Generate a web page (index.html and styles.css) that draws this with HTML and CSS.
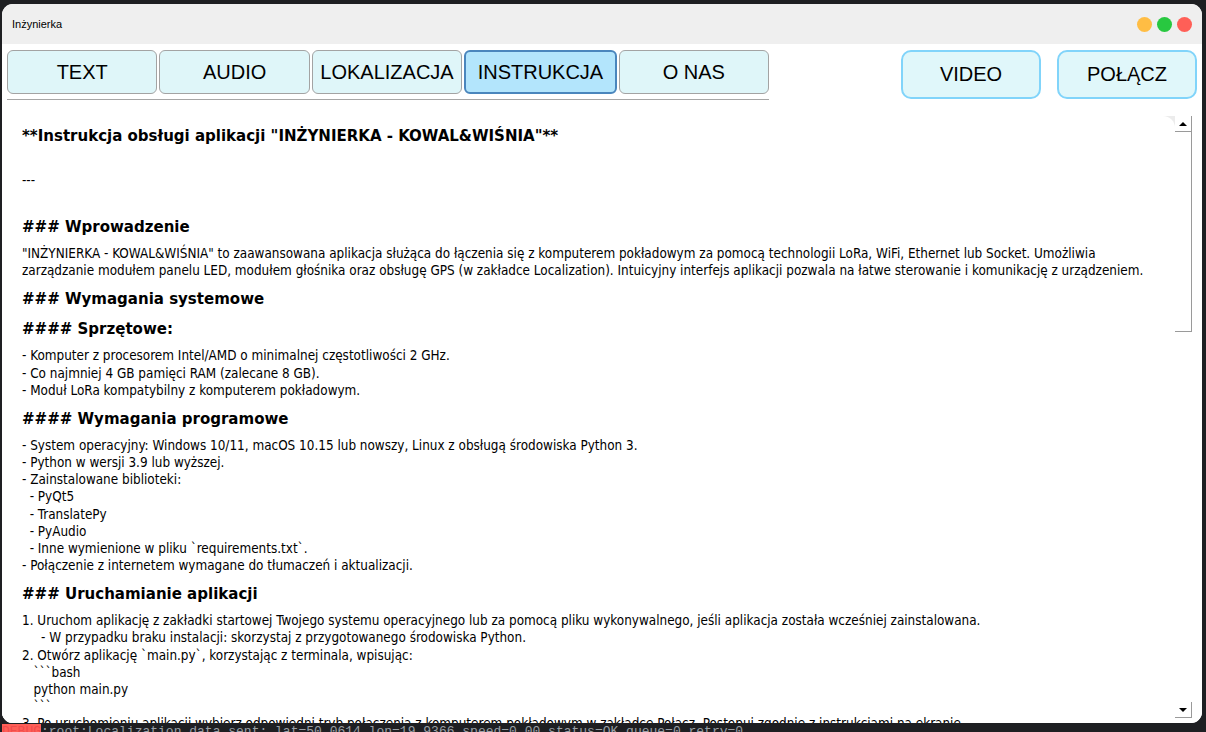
FILE: index.html
```html
<!DOCTYPE html>
<html lang="pl">
<head>
<meta charset="utf-8">
<title>Inżynierka</title>
<link rel="stylesheet" href="styles.css">
</head>
<body>
<div class="desk">
  <div class="window">
    <header class="titlebar">
      <span class="title">Inżynierka</span>
      <div class="lights">
        <span class="light yellow"></span>
        <span class="light green"></span>
        <span class="light red"></span>
      </div>
    </header>

    <div class="toolbar">
      <div class="tabs-wrap">
        <div class="tabs">
          <button class="tab">TEXT</button>
          <button class="tab">AUDIO</button>
          <button class="tab">LOKALIZACJA</button>
          <button class="tab active">INSTRUKCJA</button>
          <button class="tab">O NAS</button>
        </div>
      </div>
      <div class="actions">
        <button class="action">VIDEO</button>
        <button class="action">POŁĄCZ</button>
      </div>
    </div>

    <div class="viewer">
      <div class="pane">
        <div class="doc">
          <div class="h">**Instrukcja obsługi aplikacji "INŻYNIERKA - KOWAL&amp;WIŚNIA"**</div>
          <p class="t spaced">---</p>
          <div class="h spaced">### Wprowadzenie</div>
          <p class="t">"INŻYNIERKA - KOWAL&amp;WIŚNIA" to zaawansowana aplikacja służąca do łączenia się z komputerem pokładowym za pomocą technologii LoRa, WiFi, Ethernet lub Socket. Umożliwia
zarządzanie modułem panelu LED, modułem głośnika oraz obsługę GPS (w zakładce Localization). Intuicyjny interfejs aplikacji pozwala na łatwe sterowanie i komunikację z urządzeniem.</p>
          <div class="h">### Wymagania systemowe</div>
          <div class="h">#### Sprzętowe:</div>
          <p class="t">- Komputer z procesorem Intel/AMD o minimalnej częstotliwości 2 GHz.
- Co najmniej 4 GB pamięci RAM (zalecane 8 GB).
- Moduł LoRa kompatybilny z komputerem pokładowym.</p>
          <div class="h">#### Wymagania programowe</div>
          <p class="t">- System operacyjny: Windows 10/11, macOS 10.15 lub nowszy, Linux z obsługą środowiska Python 3.
- Python w wersji 3.9 lub wyższej.
- Zainstalowane biblioteki:
  - PyQt5
  - TranslatePy
  - PyAudio
  - Inne wymienione w pliku `requirements.txt`.
- Połączenie z internetem wymagane do tłumaczeń i aktualizacji.</p>
          <div class="h">### Uruchamianie aplikacji</div>
          <p class="t">1. Uruchom aplikację z zakładki startowej Twojego systemu operacyjnego lub za pomocą pliku wykonywalnego, jeśli aplikacja została wcześniej zainstalowana.
     - W przypadku braku instalacji: skorzystaj z przygotowanego środowiska Python.
2. Otwórz aplikację `main.py`, korzystając z terminala, wpisując:
   ```bash
   python main.py
   ```
3. Po uruchomieniu aplikacji wybierz odpowiedni tryb połączenia z komputerem pokładowym w zakładce Połącz. Postępuj zgodnie z instrukcjami na ekranie.</p>
        </div>
        <div class="scrollbar">
          <div class="sb-btn"><span class="arrow up"></span></div>
          <div class="sb-handle"></div>
          <div class="sb-track"></div>
          <div class="sb-btn"><span class="arrow down"></span></div>
        </div>
      </div>
    </div>
  </div>
  <div class="term"><span class="red">DEBUG</span><span class="grey">:root:Localization data sent: lat=50.0614 lon=19.9366 speed=0.00 status=OK queue=0 retry=0</span></div>
</div>
</body>
</html>
```

FILE: styles.css
```css
* {
  box-sizing: border-box;
}

html,
body {
  margin: 0;
  height: 100%;
}

body {
  background: #1e1f22;
  overflow: hidden;
  font-family: "Liberation Sans", Arial, sans-serif;
  color: #000;
}

.desk {
  height: 732px;
  padding: 4px 4px 0 2px;
  display: flex;
  flex-direction: column;
}

.window {
  width: 1200px;
  height: 719px;
  flex-shrink: 0;
  background: #fff;
  border-radius: 11px;
  overflow: hidden;
  display: flex;
  flex-direction: column;
}

/* title bar */
.titlebar {
  height: 40px;
  flex-shrink: 0;
  background: #efefef;
  display: flex;
  align-items: center;
  justify-content: space-between;
  padding: 0 10px;
}

.title {
  font-family: "Liberation Sans", Arial, sans-serif;
  font-size: 11px;
  color: #000;
}

.lights {
  display: flex;
  gap: 5px;
}

.light {
  width: 15px;
  height: 15px;
  border-radius: 50%;
}

.yellow { background: #ffbd44; }
.green { background: #28c840; }
.red { background: #ff5f57; }

/* toolbar with tabs */
.toolbar {
  flex-shrink: 0;
  display: flex;
  justify-content: space-between;
  align-items: flex-start;
  padding: 6px 5px 0 5px;
}

.tabs-wrap {
  width: 762px;
  padding-bottom: 5px;
  border-bottom: 1px solid #a6a6a6;
}

.tabs {
  display: flex;
  gap: 2px;
}

.tab {
  flex: 1;
  height: 44px;
  margin: 0;
  padding: 0;
  background: #dff6f9;
  border: 1px solid #a3a3a3;
  border-radius: 6px;
  font-family: "Liberation Sans", Arial, sans-serif;
  font-size: 20px;
  color: #000;
}

.tab.active {
  background: #b3e5fc;
  border: 2px solid #4a86bd;
}

.actions {
  display: flex;
  gap: 16px;
}

.action {
  width: 140px;
  height: 49px;
  margin: 0;
  padding: 0;
  background: #e0f7fa;
  border: 2px solid #81d4fa;
  border-radius: 10px;
  font-family: "Liberation Sans", Arial, sans-serif;
  font-size: 20px;
  color: #000;
}

/* text viewer */
.viewer {
  flex: 1;
  min-height: 0;
  margin-top: 16px;
  padding-right: 10px;
  display: flex;
  background: #fff;
}

.pane {
  flex: 1;
  display: flex;
  background: #ececec;
}

.doc {
  flex: 1;
  min-width: 0;
  background: #fff;
  border-top-right-radius: 12px;
  padding: 8px 0 0 20px;
  overflow: hidden;
  display: flex;
  flex-direction: column;
  gap: 8px;
  font-family: "DejaVu Sans Condensed", "DejaVu Sans", sans-serif;
}

.h {
  font-weight: bold;
  font-size: 16.7px;
  line-height: 22px;
  white-space: pre;
}

.t {
  margin: 0;
  font-size: 13.4px;
  line-height: 17.15px;
  white-space: pre;
}

.spaced {
  margin-top: 18px;
}

/* scrollbar */
.scrollbar {
  width: 17px;
  flex-shrink: 0;
  background: #fff;
  display: flex;
  flex-direction: column;
  padding-bottom: 5px;
}

.sb-btn {
  height: 16px;
  flex-shrink: 0;
  border-right: 1px solid #9a9a9a;
  border-bottom: 1px solid #9a9a9a;
  display: flex;
  align-items: center;
  justify-content: center;
}

.sb-handle {
  height: 200px;
  flex-shrink: 0;
  border-right: 1px solid #9a9a9a;
  border-bottom: 1px solid #9a9a9a;
}

.sb-track {
  flex: 1;
}

.arrow {
  width: 0;
  height: 0;
  border-left: 4px solid transparent;
  border-right: 4px solid transparent;
}

.arrow.up {
  border-bottom: 4px solid #000;
}

.arrow.down {
  border-top: 4px solid #000;
}

/* terminal behind the window */
.term {
  flex-shrink: 0;
  font-family: "Liberation Mono", monospace;
  font-size: 13px;
  line-height: 15px;
  white-space: pre;
  margin-top: 1px;
}

.term .red {
  color: #f14c4c;
}

.term .grey {
  color: #9aa0a6;
}
```
